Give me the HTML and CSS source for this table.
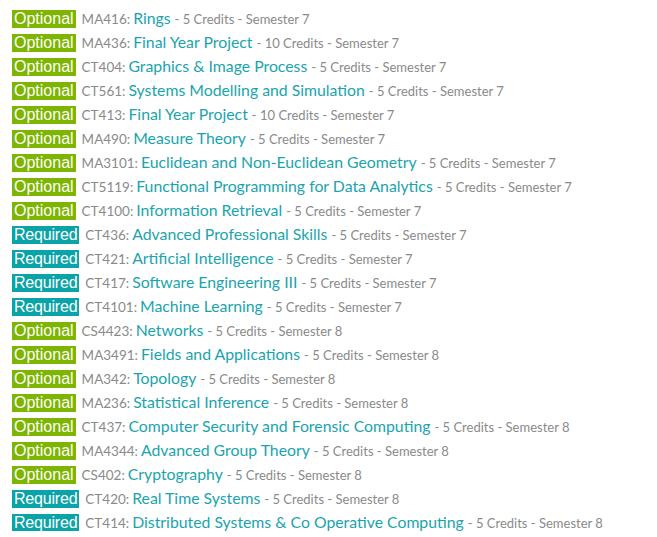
FILE: index.html
```html
<!DOCTYPE html>
<html>
<head>
<meta charset="utf-8">
<link rel="stylesheet" href="styles.css">
</head>
<body>
<ul class="modules">
<li><span class="tag opt">Optional</span> <span class="code">MA416:</span> <a class="title">Rings</a> <span class="meta">- 5 Credits - Semester 7</span></li>
<li><span class="tag opt">Optional</span> <span class="code">MA436:</span> <a class="title">Final Year Project</a> <span class="meta">- 10 Credits - Semester 7</span></li>
<li><span class="tag opt">Optional</span> <span class="code">CT404:</span> <a class="title">Graphics &amp; Image Process</a> <span class="meta">- 5 Credits - Semester 7</span></li>
<li><span class="tag opt">Optional</span> <span class="code">CT561:</span> <a class="title">Systems Modelling and Simulation</a> <span class="meta">- 5 Credits - Semester 7</span></li>
<li><span class="tag opt">Optional</span> <span class="code">CT413:</span> <a class="title">Final Year Project</a> <span class="meta">- 10 Credits - Semester 7</span></li>
<li><span class="tag opt">Optional</span> <span class="code">MA490:</span> <a class="title">Measure Theory</a> <span class="meta">- 5 Credits - Semester 7</span></li>
<li><span class="tag opt">Optional</span> <span class="code">MA3101:</span> <a class="title">Euclidean and Non-Euclidean Geometry</a> <span class="meta">- 5 Credits - Semester 7</span></li>
<li><span class="tag opt">Optional</span> <span class="code">CT5119:</span> <a class="title">Functional Programming for Data Analytics</a> <span class="meta">- 5 Credits - Semester 7</span></li>
<li><span class="tag opt">Optional</span> <span class="code">CT4100:</span> <a class="title">Information Retrieval</a> <span class="meta">- 5 Credits - Semester 7</span></li>
<li><span class="tag req">Required</span> <span class="code">CT436:</span> <a class="title">Advanced Professional Skills</a> <span class="meta">- 5 Credits - Semester 7</span></li>
<li><span class="tag req">Required</span> <span class="code">CT421:</span> <a class="title">Artificial Intelligence</a> <span class="meta">- 5 Credits - Semester 7</span></li>
<li><span class="tag req">Required</span> <span class="code">CT417:</span> <a class="title">Software Engineering III</a> <span class="meta">- 5 Credits - Semester 7</span></li>
<li><span class="tag req">Required</span> <span class="code">CT4101:</span> <a class="title">Machine Learning</a> <span class="meta">- 5 Credits - Semester 7</span></li>
<li><span class="tag opt">Optional</span> <span class="code">CS4423:</span> <a class="title">Networks</a> <span class="meta">- 5 Credits - Semester 8</span></li>
<li><span class="tag opt">Optional</span> <span class="code">MA3491:</span> <a class="title">Fields and Applications</a> <span class="meta">- 5 Credits - Semester 8</span></li>
<li><span class="tag opt">Optional</span> <span class="code">MA342:</span> <a class="title">Topology</a> <span class="meta">- 5 Credits - Semester 8</span></li>
<li><span class="tag opt">Optional</span> <span class="code">MA236:</span> <a class="title">Statistical Inference</a> <span class="meta">- 5 Credits - Semester 8</span></li>
<li><span class="tag opt">Optional</span> <span class="code">CT437:</span> <a class="title">Computer Security and Forensic Computing</a> <span class="meta">- 5 Credits - Semester 8</span></li>
<li><span class="tag opt">Optional</span> <span class="code">MA4344:</span> <a class="title">Advanced Group Theory</a> <span class="meta">- 5 Credits - Semester 8</span></li>
<li><span class="tag opt">Optional</span> <span class="code">CS402:</span> <a class="title">Cryptography</a> <span class="meta">- 5 Credits - Semester 8</span></li>
<li><span class="tag req">Required</span> <span class="code">CT420:</span> <a class="title">Real Time Systems</a> <span class="meta">- 5 Credits - Semester 8</span></li>
<li><span class="tag req">Required</span> <span class="code">CT414:</span> <a class="title">Distributed Systems &amp; Co Operative Computing</a> <span class="meta">- 5 Credits - Semester 8</span></li>
</ul>
</body>
</html>
```
FILE: styles.css
```css
html, body {
  margin: 0;
  padding: 0;
  background: #fff;
}
body {
  font-family: Lato, "Liberation Sans", sans-serif;
  color: #888;
}
.modules {
  list-style: none;
  margin: 0;
  padding: 9.4px 0 0 12px;
  display: flex;
  flex-direction: column;
  gap: 6px;
}
.modules li {
  height: 18px;
  line-height: 18px;
  display: flex;
  align-items: baseline;
  white-space: nowrap;
  font-size: 14px;
}
.tag {
  font-family: "Liberation Sans", Arial, sans-serif;
  font-size: 16px;
  color: #fff;
  height: 18px;
  line-height: 18px;
  padding: 0 2px;
  margin-right: 6px;
}
.opt { background: #7db500; }
.req { background: #0aa3a8; letter-spacing: -0.2px; }
.code {
  font-size: 13.5px;
  color: #8a8a8a;
  margin-right: 3px;
}
.title {
  font-size: 15.8px;
  color: #1aa4ae;
  margin-right: 4px;
}
.meta {
  font-size: 13px;
  color: #8a8a8a;
}
```
